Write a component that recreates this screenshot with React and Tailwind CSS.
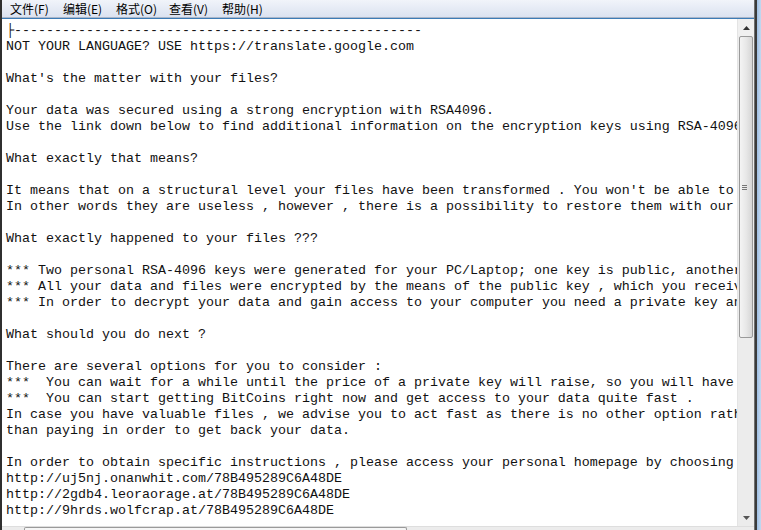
const menus = ["文件(F)", "编辑(E)", "格式(O)", "查看(V)", "帮助(H)"];

const lines = [
  "├---------------------------------------------------",
  "NOT YOUR LANGUAGE? USE https://translate.google.com",
  "",
  "What's the matter with your files?",
  "",
  "Your data was secured using a strong encryption with RSA4096.",
  "Use the link down below to find additional information on the encryption keys using RSA-4096.",
  "",
  "What exactly that means?",
  "",
  "It means that on a structural level your files have been transformed . You won't be able to use , read , see or work with them anymore .",
  "In other words they are useless , however , there is a possibility to restore them with our help .",
  "",
  "What exactly happened to your files ???",
  "",
  "*** Two personal RSA-4096 keys were generated for your PC/Laptop; one key is public, another key is private.",
  "*** All your data and files were encrypted by the means of the public key , which you received over the web .",
  "*** In order to decrypt your data and gain access to your computer you need a private key and a decryption software.",
  "",
  "What should you do next ?",
  "",
  "There are several options for you to consider :",
  "***  You can wait for a while until the price of a private key will raise, so you will have to pay twice as much to access your files or",
  "***  You can start getting BitCoins right now and get access to your data quite fast .",
  "In case you have valuable files , we advise you to act fast as there is no other option rather",
  "than paying in order to get back your data.",
  "",
  "In order to obtain specific instructions , please access your personal homepage by choosing one of the few addresses down below :",
  "http://uj5nj.onanwhit.com/78B495289C6A48DE",
  "http://2gdb4.leoraorage.at/78B495289C6A48DE",
  "http://9hrds.wolfcrap.at/78B495289C6A48DE",
  "",
];

function Arrow({ up }) {
  return (
    <svg width="7" height="4" viewBox="0 0 7 4">
      <path d={up ? "M0 4 L3.5 0 L7 4 Z" : "M0 0 L3.5 4 L7 0 Z"} fill={up ? "#333" : "#555"} />
    </svg>
  );
}

export default function App() {
  return (
    <div className="w-[761px] h-[530px] overflow-hidden bg-white flex flex-col">
      {/* Menu bar */}
      <div className="h-[18px] flex shrink-0">
        <div className="w-[2px] bg-[#2f2f2f]" />
        <div className="flex-1 flex items-center pl-[4px] bg-gradient-to-b from-[#f1f4fa] to-[#dbe2f0] border-b border-[#aab6c9]">
          {menus.map((m) => (
            <span
              key={m}
              className="w-[53px] pl-[4px] text-[12px] leading-[16px] text-black"
              style={{ fontFamily: '"Noto Sans CJK SC", "Noto Sans", sans-serif' }}
            >
              {m}
            </span>
          ))}
        </div>
        <div className="w-[1px] bg-[#6f6f6f]" />
        <div className="w-[2px] bg-[#3a3a3a]" />
        <div className="w-[4px] bg-gradient-to-r from-[#9fbfe3] to-[#c4d9f0]" />
      </div>

      {/* Body */}
      <div className="flex-1 flex min-h-0">
        <div className="w-[2px] bg-[#2f2f2f]" />
        <div className="flex-1 flex flex-col min-w-0 border-t border-[#3c7bb6]">
          <div className="flex-1 flex min-h-0">
            {/* Text */}
            <div
              className="flex-1 min-w-0 overflow-hidden pl-[4px] pt-[4px] text-[13.33px] leading-[16px] text-[#111] whitespace-pre"
              style={{ fontFamily: '"Liberation Mono", "DejaVu Sans Mono", monospace' }}
            >
              {lines.map((l, i) => (
                <div key={i} className="h-[16px]">
                  {l}
                </div>
              ))}
            </div>
            {/* Vertical scrollbar */}
            <div className="w-[17px] flex flex-col bg-[#ececec] border-l border-[#e4e4e4]">
              <div className="h-[17px] flex items-center justify-center bg-[#f0f0f0]">
                <Arrow up />
              </div>
              <div className="h-[302px] mx-[1px] rounded-[2px] border border-[#9a9a9a] bg-gradient-to-r from-[#f4f4f4] via-[#e8e8e8] to-[#d6d6d6] flex items-center justify-start pl-[2px]">
                <div className="flex flex-col gap-[1px]">
                  <div className="w-[5px] h-[1px] bg-[#777]" />
                  <div className="w-[5px] h-[1px] bg-[#777]" />
                  <div className="w-[5px] h-[1px] bg-[#777]" />
                </div>
              </div>
              <div className="flex-1" />
              <div className="h-[17px] flex items-center justify-center">
                <Arrow />
              </div>
            </div>
          </div>
          {/* Horizontal scrollbar (cut off) */}
          <div className="h-[4px] flex shrink-0 bg-[#ececec] border-t border-[#dedede]">
            <div className="w-[22px]" />
            <div className="w-[383px] rounded-t-[2px] border border-b-0 border-[#9a9a9a] bg-[#f6f6f6]" />
            <div className="flex-1" />
          </div>
        </div>
        <div className="w-[1px] bg-[#6f6f6f]" />
        <div className="w-[2px] bg-[#3a3a3a]" />
        <div className="w-[4px] bg-gradient-to-r from-[#9fbfe3] to-[#c4d9f0]" />
      </div>
    </div>
  );
}
